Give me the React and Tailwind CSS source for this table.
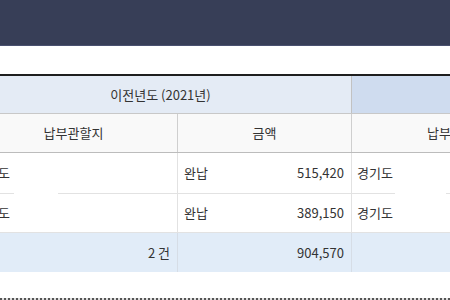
import React from "react";

const font = "font-['Noto_Sans_CJK_KR','Noto_Sans',sans-serif]";

function DataRow({ amount }) {
  return (
    <div className="flex h-[40px] items-center">
      <div className="w-[208px] h-full flex items-center pl-[4px] border-r border-[#e2e2e2] shrink-0">경기도</div>
      <div className="w-[174px] h-full flex items-center justify-between pl-[6px] pr-[7px] border-r border-[#e2e2e2] shrink-0">
        <span>완납</span>
        <span>{amount}</span>
      </div>
      <div className="w-[210px] h-full flex items-center pl-[5px] shrink-0">경기도</div>
    </div>
  );
}

export default function App() {
  return (
    <div className={`w-[450px] h-[300px] overflow-hidden bg-white flex flex-col text-[13px] text-[#333] ${font}`}>
      <div className="h-[46px] shrink-0 bg-[#373e57] border-b border-[#4a5170]" />
      <div className="h-[28px] shrink-0" />
      <div className="border-t-2 border-[#1e1e1e] shrink-0">
        <div className="-ml-[30px] w-[592px]">
          <div className="flex h-[38px] border-b border-[#c8c8c8]">
            <div className="w-[382px] bg-[#e4ebf5] border-r border-[#c2c2c2] flex items-center justify-center">이전년도 (2021년)</div>
            <div className="w-[210px] bg-[#cfdcef]" />
          </div>
          <div className="flex h-[39px] bg-[#f9f9f9] border-b border-[#bcbcbc]">
            <div className="w-[208px] border-r border-[#cfcfcf] flex items-center justify-center">납부관할지</div>
            <div className="w-[174px] border-r border-[#cfcfcf] flex items-center justify-center">금액</div>
            <div className="w-[210px] flex items-center justify-center">납부관할지</div>
          </div>
          <DataRow amount="515,420" />
        </div>
        <div className="flex h-px">
          <div className="w-[14px] bg-[#e2e2e2]" />
          <div className="w-[44px] bg-white" />
          <div className="w-[337px] bg-[#e2e2e2]" />
          <div className="w-[51px] bg-white" />
          <div className="flex-1 bg-[#e2e2e2]" />
        </div>
        <div className="-ml-[30px] w-[592px]">
          <div className="flex h-[38px] items-center">
            <div className="w-[208px] h-full flex items-center pl-[4px] border-r border-[#e2e2e2] shrink-0">경기도</div>
            <div className="w-[174px] h-full flex items-center justify-between pl-[6px] pr-[7px] border-r border-[#e2e2e2] shrink-0">
              <span>완납</span>
              <span>389,150</span>
            </div>
            <div className="w-[210px] h-full flex items-center pl-[5px] shrink-0">경기도</div>
          </div>
          <div className="h-px bg-[#e2e2e2]" />
          <div className="flex h-[39px] bg-[#e1ecf8]">
            <div className="w-[208px] border-r border-[#d6dde6] flex items-center justify-end pr-[7px]">2 건</div>
            <div className="w-[174px] border-r border-[#d6dde6] flex items-center justify-end pr-[7px]">904,570</div>
            <div className="w-[210px]" />
          </div>
        </div>
      </div>
      <div className="flex-1" />
      <div className="h-[2px] shrink-0 bg-[repeating-linear-gradient(90deg,#555_0_2px,#ddd_2px_4px)]" />
    </div>
  );
}
